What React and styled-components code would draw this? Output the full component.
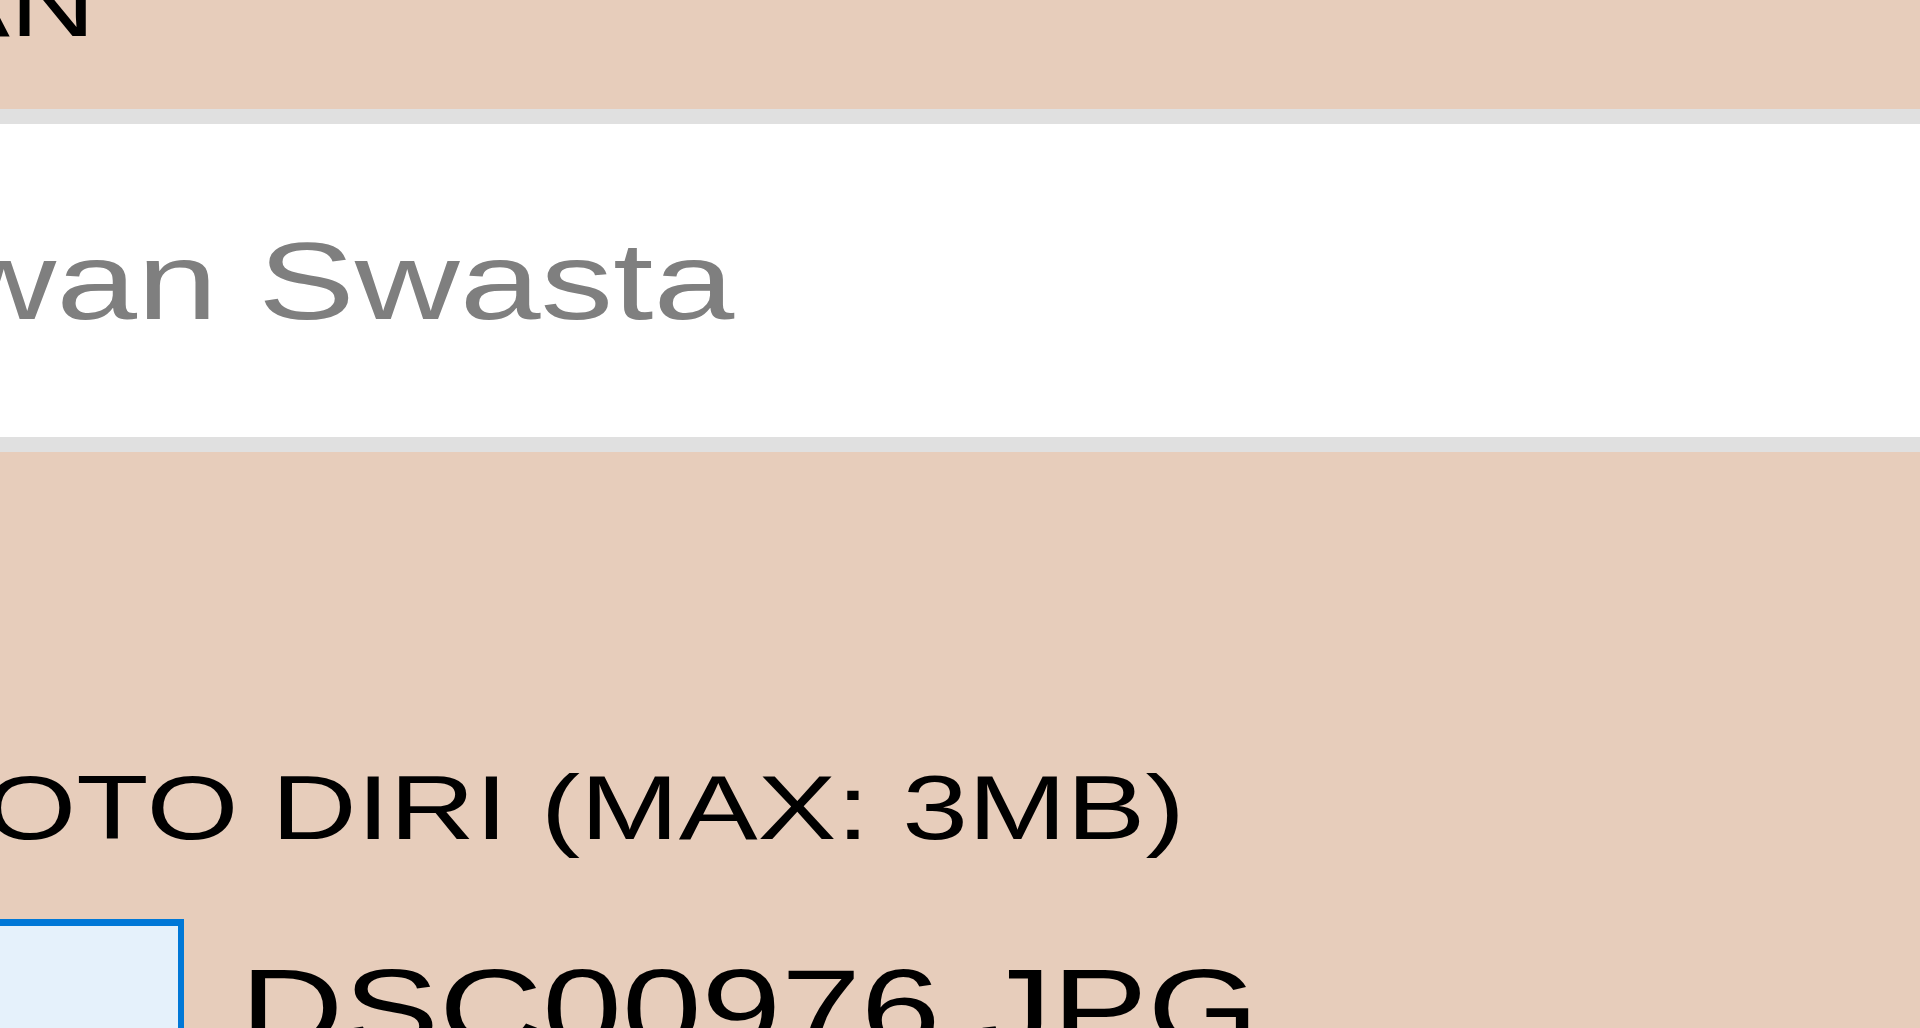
import styled, { createGlobalStyle } from "styled-components"

const GlobalStyle = createGlobalStyle`
  html, body {
    margin: 0;
    padding: 0;
    background: #e7cdbb;
    overflow: hidden;
    height: 100%;
  }
  body {
    font-family: "Liberation Sans", Arial, sans-serif;
  }
`

const Page = styled.div`
  width: 1920px;
  height: 1028px;
  overflow: hidden;
  background: #e7cdbb;
`

const Form = styled.form`
  display: flex;
  flex-direction: column;
  margin-top: -41px;
`

const Label = styled.label`
  display: block;
  height: ${(p) => p.size}px;
  font-size: ${(p) => p.size}px;
  line-height: 1;
  color: #000;
  white-space: nowrap;
  margin-left: ${(p) => p.indent}px;
  margin-top: ${(p) => p.gap || 0}px;
`

const Stretch = styled.span`
  display: inline-block;
  transform: scaleX(${(p) => p.k || 1.3});
  transform-origin: left center;
  white-space: nowrap;
`

const InputBox = styled.div`
  display: flex;
  align-items: center;
  width: 2400px;
  height: 313px;
  margin-top: 59px;
  background: #fff;
  border-top: 15px solid #e0e0e0;
  border-bottom: 15px solid #e0e0e0;
`

const InputValue = styled.span`
  font-size: 110px;
  line-height: 1;
  color: #7f7f7f;
  margin-left: -428px;
`

const FileRow = styled.div`
  display: flex;
  align-items: flex-start;
  gap: 56px;
  margin-top: 66px;
`

const ChooseButton = styled.button`
  width: 300px;
  height: 200px;
  margin-left: -116px;
  padding: 0;
  background: #e5f1fb;
  border-style: solid;
  border-color: #0078d7;
  border-width: 7px 6px;
  flex-shrink: 0;
`

const FileName = styled.span`
  font-size: 111px;
  line-height: 1;
  color: #000;
  margin-top: 35px;
`

export default function App() {
  return (
    <Page>
      <GlobalStyle />
      <Form>
        <Label size={91} indent={-608}>
          <Stretch>PEKERJAAN</Stretch>
        </Label>
        <InputBox>
          <InputValue>
            <Stretch k={1.32}>Karyawan Swasta</Stretch>
          </InputValue>
        </InputBox>
        <Label size={91} indent={-88} gap={310}>
          <Stretch>FOTO DIRI (MAX: 3MB)</Stretch>
        </Label>
        <FileRow>
          <ChooseButton type="button" aria-label="Pilih file" />
          <FileName>
            <Stretch k={1.29}>DSC00976.JPG</Stretch>
          </FileName>
        </FileRow>
      </Form>
    </Page>
  )
}
